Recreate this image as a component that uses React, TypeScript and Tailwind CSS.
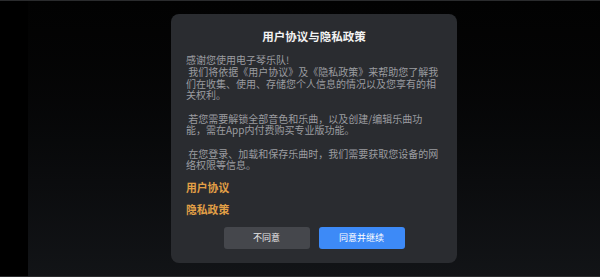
const BODY_TEXT = [
  '感谢您使用电子琴乐队!',
  ' 我们将依据《用户协议》及《隐私政策》来帮助您了解我',
  '们在收集、使用、存储您个人信息的情况以及您享有的相',
  '关权利。',
  '',
  ' 若您需要解锁全部音色和乐曲，以及创建/编辑乐曲功',
  '能，需在App内付费购买专业版功能。',
  '',
  ' 在您登录、加载和保存乐曲时，我们需要获取您设备的网',
  '络权限等信息。',
].join('\n');

const FONT = "font-['Noto_Sans_CJK_SC','Noto_Sans',sans-serif]";

/** 隐私协议弹窗 */
function PrivacyDialog() {
  return (
    <div className="flex w-[286px] flex-col rounded-[8px] bg-[#2a2c30] px-[15px] pt-[14px] pb-[14px]">
      <h1 className="text-center text-[11.5px] leading-[16px] font-bold text-[#f2f2f2]">
        用户协议与隐私政策
      </h1>

      <p className="mt-[10px] text-[10px] leading-[11.7px] whitespace-pre text-[#9b9ca0]">
        {BODY_TEXT}
      </p>

      <div className="mt-[9px] flex flex-col gap-[6px] text-[10.8px] leading-[15.6px] font-bold text-[#e3a046]">
        <span>用户协议</span>
        <span>隐私政策</span>
      </div>

      <div className="mt-[10px] flex justify-center gap-[9px]">
        <button className="h-[21.5px] w-[86px] rounded-[3px] bg-[#45474c] text-[9px] text-[#e8e8e8]">
          不同意
        </button>
        <button className="h-[21.5px] w-[86px] rounded-[3px] bg-[#3d8af7] text-[9px] text-white">
          同意并继续
        </button>
      </div>
    </div>
  );
}

export default function App() {
  return (
    <div className={`flex h-[277px] w-full border-y border-[#2a2b2d] bg-black ${FONT}`}>
      <div className="w-[28px] shrink-0 bg-black" />
      <div className="flex flex-1 items-center justify-center bg-gradient-to-b from-[#020202] to-[#121417]">
        <PrivacyDialog />
      </div>
    </div>
  );
}
